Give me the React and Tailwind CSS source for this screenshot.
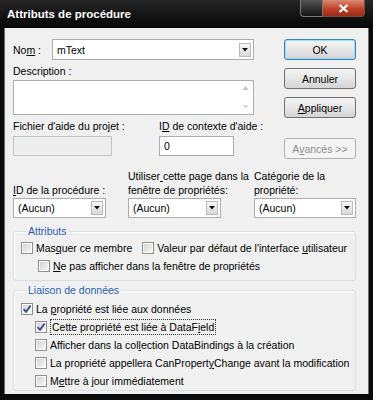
import React from 'react';

const Arrow = () => (
  <span className="flex h-[14px] w-[12px] shrink-0 items-center justify-center border border-[#b9b9b9] bg-linear-to-b from-[#f7f7f7] to-[#d9d9d9]">
    <svg width="6" height="4" viewBox="0 0 6 4">
      <path d="M0 0 H6 L3 3.5 Z" fill="#111" />
    </svg>
  </span>
);

const Combo = ({ value, className = '' }) => (
  <div className={`flex items-center justify-between border border-[#abadb3] bg-white pl-[4px] pr-[2px] ${className}`}>
    <span>{value}</span>
    <Arrow />
  </div>
);

const Button = ({ children, variant }) => {
  if (variant === 'default') {
    return (
      <div className="flex h-[21px] items-center justify-center rounded-[3px] border border-[#3c7fb1] bg-linear-to-b from-[#f4f4f4] via-[#e6e6e6] to-[#d4d4d4] shadow-[inset_0_0_0_1px_#9fdcf6]">
        {children}
      </div>
    );
  }
  if (variant === 'disabled') {
    return (
      <div className="flex h-[21px] items-center justify-center rounded-[3px] border border-[#adb2b5] bg-[#f4f4f4] text-[#8d8d8d]">
        {children}
      </div>
    );
  }
  return (
    <div className="flex h-[21px] items-center justify-center rounded-[3px] border border-[#707070] bg-linear-to-b from-[#f4f4f4] via-[#e6e6e6] to-[#d4d4d4]">
      {children}
    </div>
  );
};

const Check = ({ checked }) => (
  <span className="flex h-[12px] w-[12px] shrink-0 items-center justify-center border border-[#8f8f8f] bg-white">
    <span className="relative h-[8px] w-[8px] bg-linear-to-br from-[#d2d2d2] to-[#f7f7f7]">
      {checked && (
        <svg className="absolute -left-[2px] -top-[2px]" width="12" height="12" viewBox="0 0 12 12">
          <path d="M2.6 6.2 L5 8.8 L9.6 2.6" fill="none" stroke="#3b4f8c" strokeWidth="1.8" />
        </svg>
      )}
    </span>
  </span>
);

const CheckRow = ({ checked, children, className = '' }) => (
  <div className={`flex h-[18px] items-center gap-[3px] whitespace-nowrap ${className}`}>
    <Check checked={checked} />
    {children}
  </div>
);

export default function App() {
  return (
    <div className="flex h-[400px] w-[373px] flex-col overflow-hidden bg-[#0b0b0b] font-['Liberation_Sans',Arial,sans-serif] text-[10.5px] leading-[14px] text-black">
      {/* title bar */}
      <div className="flex h-[28px] shrink-0 items-start bg-linear-to-b from-[#262626] to-[#070707]">
        <div className="pl-[7px] pt-[7px] text-[11.5px] font-bold text-white">
          Attributs de procédure
        </div>
        <div className="ml-auto mr-[8px] flex">
          <div className="h-[17px] w-[23px] rounded-bl-[4px] border border-t-0 border-[#7a7a7a] bg-linear-to-b from-[#555] to-[#161616]" />
          <div className="flex h-[17px] w-[42px] items-center justify-center rounded-br-[4px] border border-l-0 border-t-0 border-[#7a4a40] bg-linear-to-b from-[#d98a72] via-[#c2452c] to-[#9c2a15]">
            <svg width="11" height="9" viewBox="0 0 11 9">
              <path d="M1.5 1 L9.5 8 M9.5 1 L1.5 8" stroke="#fff" strokeWidth="2.2" />
            </svg>
          </div>
        </div>
      </div>

      {/* body */}
      <div className="mx-[4px] flex h-[366px] flex-col border-x border-[#6b6b6b] bg-[#f0f0f0] pl-[8px] pr-[12px] pt-[11px]">
        <div className="flex">
          <div className="flex w-[241px] flex-col">
            <div className="flex h-[21px] items-center">
              <span className="w-[39px]">No<u className="underline">m</u> :</span>
              <Combo value="mText" className="h-[21px] flex-1" />
            </div>
            <div className="mt-[4px]">Description :</div>
            <div className="mt-[2px] flex h-[35px] border border-[#abadb3] bg-white">
              <div className="flex-1" />
              <div className="flex w-[16px] flex-col items-center justify-between py-[5px]">
                <svg width="7" height="4" viewBox="0 0 7 4">
                  <path d="M0 4 L3.5 0 L7 4 Z" fill="#c9c9c9" />
                </svg>
                <svg width="7" height="4" viewBox="0 0 7 4">
                  <path d="M0 0 L3.5 4 L7 0 Z" fill="#dedede" />
                </svg>
              </div>
            </div>
            <div className="mt-[4px] flex">
              <div className="flex w-[99px] flex-col">
                <span className="whitespace-nowrap">Fichier d'aide du pro<u className="underline">j</u>et :</span>
                <div className="mt-[3px] h-[20px] border border-[#c2c4c8] bg-[#ededed]" />
              </div>
              <div className="ml-[47px] flex w-[75px] flex-col">
                <span className="whitespace-nowrap">I<u className="underline">D</u> de contexte d'aide :</span>
                <div className="mt-[3px] flex h-[20px] items-center border border-[#abadb3] bg-white pl-[4px]">0</div>
              </div>
            </div>
          </div>

          <div className="ml-auto flex w-[72px] flex-col">
            <Button variant="default">OK</Button>
            <div className="mt-[8px]">
              <Button>Annuler</Button>
            </div>
            <div className="mt-[8px]">
              <Button>
                <span><u className="underline">A</u>ppliquer</span>
              </Button>
            </div>
            <div className="mt-[20px]">
              <Button variant="disabled">
                <span>A<u className="underline">v</u>ancés &gt;&gt;</span>
              </Button>
            </div>
          </div>
        </div>

        {/* combo row */}
        <div className="mt-[10px] flex items-end">
          <div className="flex w-[93px] flex-col">
            <span className="whitespace-nowrap"><u className="underline">I</u>D de la procédure :</span>
            <Combo value="(Aucun)" className="mt-[1px] h-[20px]" />
          </div>
          <div className="ml-[22px] flex w-[93px] flex-col">
            <span className="whitespace-nowrap">
              Utiliser<u className="underline"> </u>cette page dans la
              <br />
              fenêtre de propriétés:
            </span>
            <Combo value="(Aucun)" className="mt-[1px] h-[20px]" />
          </div>
          <div className="ml-[33px] flex w-[102px] flex-col">
            <span className="whitespace-nowrap">
              Catégorie de la
              <br />
              propriété:
            </span>
            <Combo value="(Aucun)" className="mt-[1px] h-[20px]" />
          </div>
        </div>

        {/* Attributs */}
        <fieldset className="mt-[6px] rounded-[3px] border border-[#d5dfe5] pb-[5px] pl-[7px] shadow-[inset_1px_1px_0_#fff]">
          <legend className="ml-[5px] px-[2px] text-[#2a5cb5]">Attributs</legend>
          <div className="mt-[1px] flex">
            <CheckRow>
              <span>Mas<u className="underline">q</u>uer ce membre</span>
            </CheckRow>
            <CheckRow className="ml-[10px]">
              <span>Valeur par défaut de l'interface <u className="underline">u</u>tilisateur</span>
            </CheckRow>
          </div>
          <CheckRow className="ml-[17px]">
            <span><u className="underline">N</u>e pas afficher dans la fenêtre de propriétés</span>
          </CheckRow>
        </fieldset>

        {/* Liaison de données */}
        <fieldset className="mt-[2px] rounded-[3px] border border-[#d5dfe5] pl-[7px] shadow-[inset_1px_1px_0_#fff]">
          <legend className="ml-[5px] px-[2px] text-[#2a5cb5]">Liaison de données</legend>
          <div className="mt-[3px] flex flex-col">
            <CheckRow checked>
              <span>La <u className="underline">p</u>ropriété est liée aux données</span>
            </CheckRow>
            <CheckRow checked className="ml-[14px]">
              <span className="border border-dotted border-[#333] px-[1px]">Cette propriété est liée à DataF<u className="underline">i</u>eld</span>
            </CheckRow>
            <CheckRow className="ml-[14px]">
              <span>Afficher dans la col<u className="underline">l</u>ection DataBindings à la création</span>
            </CheckRow>
            <CheckRow className="ml-[14px]">
              <span>La propriété appellera CanPropert<u className="underline">y</u>Change avant la modification</span>
            </CheckRow>
            <CheckRow className="ml-[14px]">
              <span>M<u className="underline">e</u>ttre à jour immédiatement</span>
            </CheckRow>
          </div>
        </fieldset>
      </div>
    </div>
  );
}
